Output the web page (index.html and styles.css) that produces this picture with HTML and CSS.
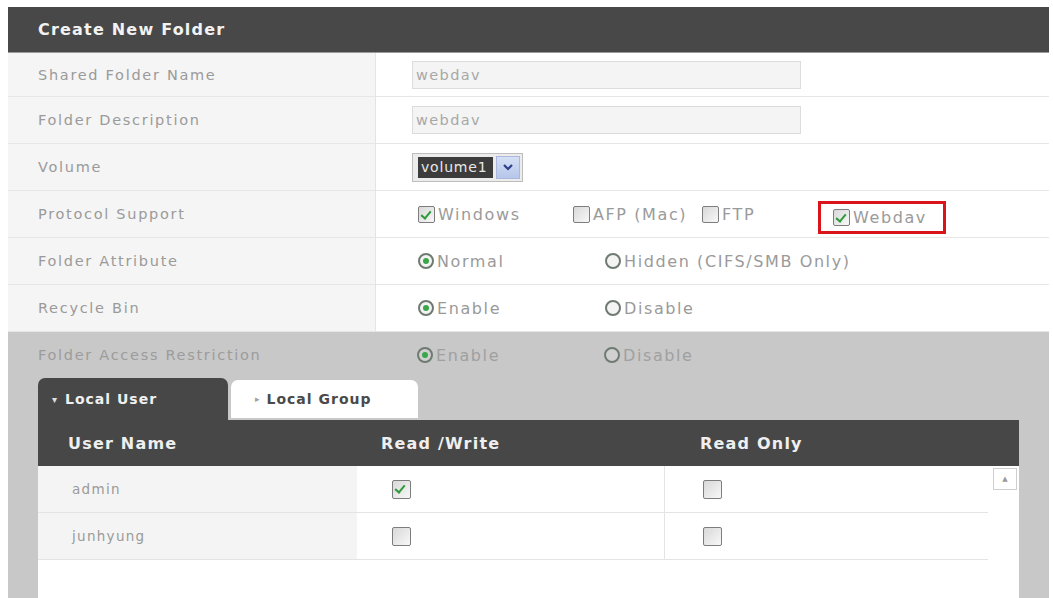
FILE: index.html
```html
<!DOCTYPE html>
<html>
<head>
<meta charset="utf-8">
<link rel="stylesheet" href="styles.css">
</head>
<body>
<div class="panel">
  <div class="title">Create New Folder</div>

  <div class="row first">
    <div class="label">Shared Folder Name</div>
    <div class="field"><div class="input">webdav</div></div>
  </div>
  <div class="row">
    <div class="label">Folder Description</div>
    <div class="field"><div class="input">webdav</div></div>
  </div>
  <div class="row">
    <div class="label">Volume</div>
    <div class="field">
      <div class="select">
        <span class="sel-text">volume1</span>
        <span class="sel-btn"><svg width="12" height="8" viewBox="0 0 12 8"><path d="M2 2 L6 6 L10 2" fill="none" stroke="#2c3e8c" stroke-width="2.2"/></svg></span>
      </div>
    </div>
  </div>
  <div class="row">
    <div class="label">Protocol Support</div>
    <div class="field">
      <span class="opt w155"><span class="cb on"></span>Windows</span>
      <span class="opt w129"><span class="cb"></span>AFP (Mac)</span>
      <span class="opt w116"><span class="cb"></span>FTP</span>
      <span class="opt hl"><span class="cb on"></span>Webdav</span>
    </div>
  </div>
  <div class="row">
    <div class="label">Folder Attribute</div>
    <div class="field">
      <span class="opt w187"><span class="rd on"></span>Normal</span>
      <span class="opt"><span class="rd"></span>Hidden (CIFS/SMB Only)</span>
    </div>
  </div>
  <div class="row">
    <div class="label">Recycle Bin</div>
    <div class="field">
      <span class="opt w187"><span class="rd on"></span>Enable</span>
      <span class="opt"><span class="rd"></span>Disable</span>
    </div>
  </div>

  <div class="access">
    <div class="row plain">
      <div class="label">Folder Access Restriction</div>
      <div class="field">
        <span class="opt w187"><span class="rd on"></span>Enable</span>
        <span class="opt"><span class="rd"></span>Disable</span>
      </div>
    </div>

    <div class="tabs">
      <div class="tab active"><span class="arrow">&#9662;</span>Local User</div>
      <div class="tab"><span class="arrow small">&#9656;</span>Local Group</div>
    </div>

    <div class="table">
      <div class="thead">
        <div class="c1">User Name</div>
        <div class="c2">Read /Write</div>
        <div class="c3">Read Only</div>
      </div>
      <div class="tbody">
        <div class="rows">
          <div class="trow">
            <div class="c1">admin</div>
            <div class="c2"><span class="cb on"></span></div>
            <div class="c3"><span class="cb"></span></div>
          </div>
          <div class="trow">
            <div class="c1">junhyung</div>
            <div class="c2"><span class="cb"></span></div>
            <div class="c3"><span class="cb"></span></div>
          </div>
        </div>
        <div class="scroll"><span class="up">&#9650;</span></div>
      </div>
    </div>
  </div>
</div>
</body>
</html>
```
FILE: styles.css
```css
html, body {
  margin: 0;
  padding: 0;
  background: #ffffff;
  overflow: hidden;
}
body {
  font-family: "DejaVu Sans", "Liberation Sans", sans-serif;
  color: #999;
}
.panel {
  margin: 7px 0 0 8px;
  width: 1041px;
}
.title {
  height: 45px;
  background: #484848;
  border-bottom: 1px solid #9a9a9a;
  color: #f2f2f2;
  font-weight: bold;
  font-size: 16px;
  letter-spacing: 1.2px;
  padding-left: 30px;
  display: flex;
  align-items: center;
}
.row {
  display: flex;
  height: 46px;
  border-bottom: 1px solid #e6e6e6;
}
.row.first {
  height: 43px;
}
.label {
  width: 337px;
  padding-left: 30px;
  background: #f5f5f5;
  border-right: 1px solid #e4e4e4;
  display: flex;
  align-items: center;
  font-size: 14.5px;
  letter-spacing: 1.7px;
  color: #9a9a9a;
}
.field {
  flex: 1;
  padding-left: 36px;
  display: flex;
  align-items: center;
  font-size: 16px;
  letter-spacing: 1.6px;
  color: #9a9a9a;
}
.input {
  width: 384px;
  height: 26px;
  border: 1px solid #dcdcdc;
  background: #f4f4f4;
  padding-left: 3px;
  display: flex;
  align-items: center;
  font-size: 14.5px;
  letter-spacing: 1.4px;
  color: #a8a8a8;
}
.select {
  width: 111px;
  height: 29px;
  border: 1px solid #bdbdbd;
  background: #ececec;
  display: flex;
  align-items: center;
  padding: 0 2px 0 5px;
  box-sizing: border-box;
}
.sel-text {
  background: #3c3c3c;
  color: #e8e8e8;
  font-size: 14px;
  letter-spacing: 0.8px;
  padding: 1px 3px;
  width: 75px;
  height: 21px;
  box-sizing: border-box;
  line-height: 19px;
}
.sel-btn {
  margin-left: 3px;
  width: 24px;
  height: 23px;
  background: linear-gradient(#d6e0f5, #b6c6ea);
  border: 1px solid #a9b8dc;
  box-sizing: border-box;
  display: flex;
  align-items: center;
  justify-content: center;
}
.opt {
  display: inline-flex;
  align-items: center;
  margin-left: 6px;
  flex: none;
}
.opt + .opt { margin-left: 0; }
.w155 { width: 155px; }
.w129 { width: 129px; }
.w116 { width: 116px; }
.w187 { width: 187px; }
.opt.hl {
  border: 3px solid #d9141b;
  width: 110px;
  height: 27px;
  box-sizing: content-box;
  padding-left: 12px;
  margin-top: 7px;
}
.cb {
  width: 17px;
  height: 17px;
  border: 1px solid #7d7d7d;
  border-radius: 2px;
  background: linear-gradient(135deg, #d8d8d8, #f8f8f8);
  box-sizing: border-box;
  margin-right: 3px;
  display: inline-block;
  position: relative;
  flex: none;
}
.cb.on::after {
  content: "";
  position: absolute;
  left: 4px;
  top: 2px;
  width: 4px;
  height: 8px;
  border: solid #2f9a3a;
  border-width: 0 2.5px 2.5px 0;
  transform: rotate(40deg);
}
.rd {
  width: 16px;
  height: 16px;
  border: 2px solid #6f7a72;
  border-radius: 50%;
  background: #f4f4f4;
  box-sizing: border-box;
  margin-right: 3px;
  display: inline-block;
  position: relative;
  flex: none;
}
.rd.on::after {
  content: "";
  position: absolute;
  left: 3px;
  top: 3px;
  width: 6px;
  height: 6px;
  border-radius: 50%;
  background: #3aa64a;
}
.access {
  background: #c8c8c8;
  height: 270px;
}
.row.plain {
  border-bottom: none;
}
.row.plain .label {
  background: transparent;
  border-right: none;
  color: #9c9c9c;
}
.row.plain .field {
  color: #a0a0a0;
}
.row.plain .rd {
  background: #d0d0d0;
}
.tabs {
  display: flex;
  align-items: flex-end;
  gap: 3px;
  padding-left: 30px;
  height: 42px;
}
.tab {
  width: 187px;
  height: 38px;
  background: #ffffff;
  border-radius: 7px 7px 0 0;
  display: flex;
  align-items: center;
  padding-left: 24px;
  box-sizing: border-box;
  font-weight: bold;
  font-size: 14px;
  letter-spacing: 1px;
  color: #4a4a4a;
  margin-bottom: 2px;
}
.tab.active {
  width: 190px;
  height: 42px;
  background: #474747;
  color: #f0f0f0;
  padding-left: 14px;
  margin-bottom: 0;
}
.arrow {
  font-size: 10px;
  margin-right: 7px;
  color: #e0e0e0;
}
.arrow.small {
  font-size: 9px;
  color: #a0a0a0;
  margin-right: 6px;
}
.table {
  margin-left: 30px;
  width: 981px;
}
.thead {
  display: flex;
  height: 46px;
  background: #474747;
  color: #efefef;
  font-weight: bold;
  font-size: 16px;
  letter-spacing: 1.2px;
  align-items: center;
}
.thead .c1 { width: 289px; padding-left: 30px; }
.thead .c2 { width: 284px; padding-left: 24px; }
.thead .c3 { padding-left: 35px; }
.tbody {
  display: flex;
  background: #ffffff;
  height: 132px;
}
.rows {
  width: 950px;
}
.trow {
  display: flex;
  height: 46px;
  border-bottom: 1px solid #e4e4e4;
}
.trow > div {
  display: flex;
  align-items: center;
}
.trow .c1 {
  width: 285px;
  padding-left: 34px;
  background: #f4f4f4;
  font-size: 13.5px;
  letter-spacing: 1.3px;
  color: #9a9a9a;
}
.trow .c2 {
  width: 272px;
  padding-left: 35px;
  border-right: 1px solid #e4e4e4;
}
.trow .c3 {
  padding-left: 38px;
}
.trow .cb {
  width: 19px;
  height: 19px;
}
.scroll {
  flex: 1;
  padding: 2px 0 0 5px;
}
.up {
  display: flex;
  width: 24px;
  height: 22px;
  border: 1px solid #cfcfcf;
  box-sizing: border-box;
  align-items: center;
  justify-content: center;
  font-size: 7px;
  color: #999;
  background: #fff;
}
```
